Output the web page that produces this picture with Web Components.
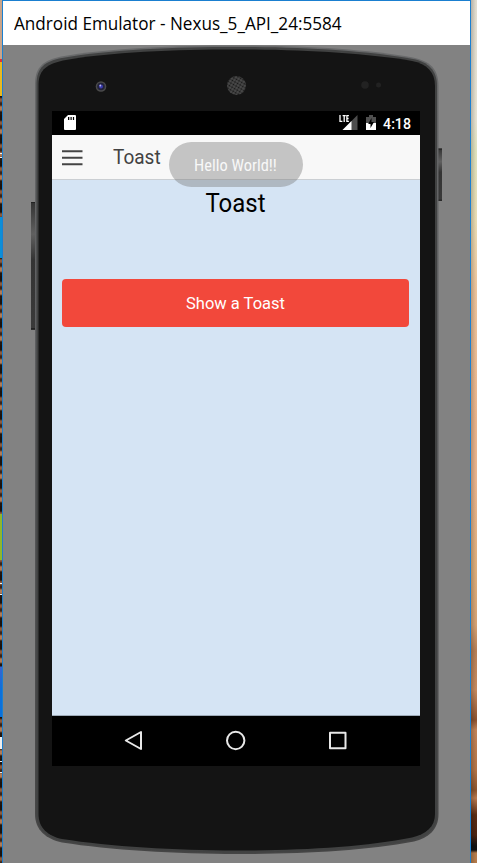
<!DOCTYPE html>
<html lang="en"><head><meta charset="utf-8"><title>Android Emulator</title>
<style>
body{margin:0;width:477px;height:863px;overflow:hidden;font-family:Roboto,sans-serif}
</style></head><body>
<desk-top>
  <emulator-window caption="Android Emulator - Nexus_5_API_24:5584">
    <nexus-phone>
      <status-bar time="4:18"></status-bar>
      <app-bar>Toast</app-bar>
      <app-page heading="Toast"><action-button>Show a Toast</action-button></app-page>
      <nav-bar></nav-bar>
      <toast-message slot="overlay">Hello World!!</toast-message>
    </nexus-phone>
  </emulator-window>
</desk-top>
<script>
const define=(name,html,setup)=>customElements.define(name,class extends HTMLElement{
  constructor(){super();this.attachShadow({mode:'open'}).innerHTML=html;}
  connectedCallback(){if(setup)setup(this,this.shadowRoot);}
});

define('desk-top',`<style>
:host{display:grid;grid-template-columns:2px 469px 6px;height:863px;overflow:hidden}
.l{background:
 linear-gradient(#c9a489 0 59px,#d33 59px 62px,#e8b820 62px 96px,transparent 96px 217px,#0a8fd8 217px 258px,transparent 258px 514px,#8fb52c 514px 560px,transparent 560px 666px,#3a63cf 667px,#0a70dc 690px 717px,transparent 717px),
 linear-gradient(transparent 0 153px,#eee 153px 154px,transparent 154px 157px,#eee 157px 158px,transparent 158px 583px,#eee 583px 584px,transparent 584px 594px,#eee 594px 595px,transparent 595px 737px,#eee 737px 749px,transparent 749px 761px,#eee 761px 762px,transparent 762px 772px,#eee 772px 773px,transparent 773px),
 repeating-linear-gradient(#1c120c 0 5px,#8c5a3b 7px 9px,#3a2417 11px 13px,#b07a55 15px 18px,#22160e 20px 23px)}
.r{background:linear-gradient(90deg,rgba(0,0,0,.2),transparent 5px),
 linear-gradient(#e2ddd0,#e6e2d2 120px,#dfe2bd 150px,#e8dcb4 220px,#ecc49c 290px,#e8b48c 420px,#e8b48e 480px,#dcae7c 570px,#d4a274 625px,#b58058 650px,#c48a60 690px,#8a5230 720px,#c0845a 730px,#b17448 770px,#8a5530 790px,#b87a50 798px,#5a2c14 815px,#4a2412 835px,#101010 846px 850px,#b57c4c 853px)}
</style><div class="l"></div><slot></slot><div class="r"></div>`);

define('emulator-window',`<style>
:host{display:flex;flex-direction:column;box-sizing:border-box;height:863px;border:1px solid #1a7fd0;border-bottom:0;background:#828282}
header{height:44px;flex:none;background:#fff;display:flex;align-items:center;padding-left:11px;box-sizing:border-box}
span{font:18.2px/44px "Open Sans","Noto Sans",sans-serif;color:#000;white-space:nowrap;display:block;transform:scaleX(.942);transform-origin:0 50%}
</style><header><span></span></header><slot></slot>`,(el,r)=>{r.querySelector('span').textContent=el.getAttribute('caption');});

define('nexus-phone',`<style>
:host{display:block;position:relative;height:818px;width:467px;box-sizing:border-box;padding:66px 0 0 49px}
svg{position:absolute;left:-3px;top:-45px;width:477px;height:863px;pointer-events:none}
.screen{position:relative;display:flex;flex-direction:column;width:368px;height:655px;background:#000}
</style>
<svg viewBox="0 0 477 863">
<defs>
<linearGradient id="k" x1="0" y1="0" x2="0" y2="1"><stop offset="0" stop-color="#333"/><stop offset=".25" stop-color="#606060"/><stop offset=".45" stop-color="#343434"/><stop offset="1" stop-color="#3a3a3a"/></linearGradient>
<linearGradient id="rim" x1="0" y1="0" x2="0" y2="1"><stop offset="0" stop-color="#696a6b"/><stop offset=".4" stop-color="#5c5d5f"/><stop offset="1" stop-color="#454545"/></linearGradient>
<pattern id="mesh" width="3" height="3" patternUnits="userSpaceOnUse" patternTransform="rotate(30)"><rect width="3" height="3" fill="#4c4c4c"/><circle cx="1.5" cy="1.5" r="1.050" fill="#171717"/></pattern>
</defs>
<rect x="31" y="202" width="5" height="128" fill="url(#k)"/><rect x="31" y="202" width="4" height="1" fill="#222"/><rect x="31" y="328" width="4" height="1.500" fill="#222"/>
<rect x="437" y="148.500" width="5" height="52.500" fill="url(#k)"/><rect x="438" y="148.500" width="4" height="1.500" fill="#292929"/><rect x="438" y="199.500" width="4" height="1.500" fill="#292929"/>
<path d="M35 84C35 66 45 60 61 56.500C110 48 175 45.500 237 45.500C300 45.500 365 49 413 57.500C429 61 438.500 68 438.500 86V814C438.500 830 428 838 414 841.500C365 851 300 854 237 854C175 854 110 850 62 842.500C46 839 35 830 35 814Z" fill="url(#rim)"/>
<path d="M36.500 84C36.500 67 46 61 62 58C110 49.500 175 47 237 47C300 47 365 50.500 413 59C428 62 437 70 437 86V814C437 829 427 836.500 413 840C365 849.500 300 852.500 237 852.500C175 852.500 110 848.500 62 841C47 838 36.500 829 36.500 814Z" fill="#414242"/>
<path d="M38.500 84C39 69 48 64 63 60.500C110 52 175 49.500 237 49.500C300 49.500 365 53 412 61C427 64 435 72 435 86V814C435 827 426 834 412 837.500C365 847 300 850.500 237 850.500C175 850.500 110 846.500 62 839C48 836 38.500 828 38.500 814Z" fill="#141414"/>
<circle cx="101" cy="86.500" r="5.300" fill="#4a4a4a"/><circle cx="101" cy="86.500" r="3.800" fill="#22223a"/><circle cx="101" cy="86.500" r="2" fill="#3c3cb0"/><circle cx="100.300" cy="85.500" r=".9" fill="#b8b8ee"/>
<circle cx="236.500" cy="85.500" r="9.500" fill="url(#mesh)"/>
<circle cx="365" cy="85" r="3.800" fill="#222"/><circle cx="378.500" cy="85" r="2.500" fill="#222"/>
</svg>
<div class="screen"><slot></slot><slot name="overlay"></slot></div>`);

define('status-bar',`<style>
:host{display:flex;height:24px;flex:none;background:#000;color:#fff;align-items:center;padding:0 9px 0 12px;box-sizing:border-box}
svg{flex:none;display:block}.sp{flex:1}
span{font:500 14.2px/24px Roboto,sans-serif;margin-left:7px;padding-top:1px}
</style>
<svg width="13" height="24" viewBox="0 0 13 24"><path d="M4 4H11Q12 4 12 5V18Q12 19 11 19H1Q0 19 0 18V8Z" fill="#fff"/><path d="M4 6H5.300V9H4ZM6.500 6H7.700V9H6.500ZM8.900 6H10.100V9H8.900Z" fill="#000"/></svg>
<div class="sp"></div>
<svg width="19" height="24" viewBox="0 0 19 24"><path d="M18.500 4V19H3.500Z" fill="#4d4d4d"/><path d="M12.500 10V19H3.500Z" fill="#fff"/><path d="M1 4V10.400H3.400M3.600 4.600H6.800M5.200 4.600V11M9.900 4.600H7.900V10.400H9.900M7.900 7.500H9.600" fill="none" stroke="#fff" stroke-width="1.300"/></svg>
<svg width="10" height="24" viewBox="0 0 10 24" style="margin-left:8px"><path d="M3 4H7V6H10V19H0V6H3Z" fill="#505050"/><path d="M0 12H10V19H0Z" fill="#fff"/><path d="M5.500 7L2.200 13H4.500V17L8 11H5.500Z" fill="#000"/></svg>
<span></span>`,(el,r)=>{r.querySelector('span').textContent=el.getAttribute('time');});

define('app-bar',`<style>
:host{display:flex;height:45px;flex:none;box-sizing:border-box;background:#f8f8f8;border-bottom:1px solid #cbcfd3;padding-left:10px;align-items:center}
span{font:20px/44px Roboto,sans-serif;color:#424242;margin-left:31px;transform:scaleX(.95);transform-origin:0 50%}
svg{display:block}
</style><svg width="20" height="44" viewBox="0 0 20 44" overflow="visible"><path d="M0 16.200H20.500M0 22.800H20.500M0 29.200H20.500" stroke="#444" stroke-width="2"/></svg><span><slot></slot></span>`);

define('app-page',`<style>
:host{display:flex;flex-direction:column;height:536px;flex:none;box-sizing:border-box;background:#d5e4f4;border-bottom:1px solid #9eabb8;padding:8px 11px 0 10px}
h1{margin:0;font:400 25px/32px Roboto,sans-serif;color:#000;text-align:center;height:91px;transform:scaleX(.96)}
</style><h1></h1><slot></slot>`,(el,r)=>{r.querySelector('h1').textContent=el.getAttribute('heading');});

define('action-button',`<style>
:host{display:block}
button{display:block;width:100%;height:48px;border:0;padding:1px 0 0;border-radius:4px;background:#f2483b;color:#fff;font:16.500px/47px Roboto,sans-serif}
</style><button><slot></slot></button>`);

define('nav-bar',`<style>
:host{display:flex;flex:1;background:#000;align-items:flex-start;justify-content:space-around;padding:0 31px;box-sizing:border-box}
svg{display:block;width:22px;height:50px;fill:none;stroke:#e8e8e8;stroke-width:2;stroke-linejoin:round}
</style>
<svg viewBox="0 0 22 50"><path d="M18 16V33L2.800 24.500Z"/></svg>
<svg viewBox="0 0 22 50"><circle cx="10.700" cy="24.500" r="8.700"/></svg>
<svg viewBox="0 0 22 50"><rect x="3" y="16.800" width="15.500" height="15.500"/></svg>`);

define('toast-message',`<style>
:host{position:absolute;left:116.500px;top:31px;width:134px;height:45px;border-radius:23px;background:rgba(117,117,117,.4);color:#f8f8f8;display:flex;align-items:center;justify-content:center}
span{font:16.400px/45px "Roboto Condensed",Roboto,sans-serif;padding-top:2px;white-space:nowrap}
span{transform:scaleX(var(--fit,1))}
</style><span><slot></slot></span>`,(el,r)=>{
  // Condensed lettering: the message always spans 83px inside its pill.
  const s=r.querySelector('span');s.style.setProperty('--fit',83/s.offsetWidth);
});
</script></body></html>
